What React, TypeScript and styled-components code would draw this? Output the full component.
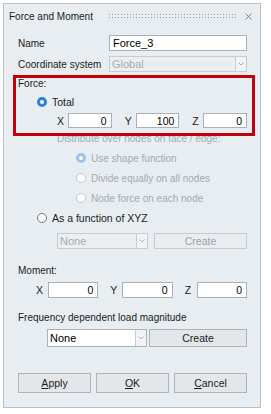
import styled, { createGlobalStyle } from 'styled-components'

const GlobalStyle = createGlobalStyle`
body {
    margin: 0;
    background: #ffffff;
    font-family: "Liberation Sans", Arial, sans-serif;
    font-size: 10px;
    color: #1b1b1b;
}
`

const Radio = ({ checked, disabled }: { checked?: boolean; disabled?: boolean }) => (
    <RadioDot checked={checked} disabled={disabled} />
)

const Chevron = () => (
    <svg width="6" height="4" viewBox="0 0 6 4">
        <polyline points="0.5,0.5 3,3 5.5,0.5" fill="none" stroke="#a9b0b6" strokeWidth="1" />
    </svg>
)

const Dropdown = ({ value, disabled, w }: { value: string; disabled?: boolean; w?: number }) => (
    <Select disabled={disabled} w={w}>
        <SelectText disabled={disabled}>{value}</SelectText>
        <SelectArrow><Chevron /></SelectArrow>
    </Select>
)

const Axis = ({ label, value, lw }: { label: string; value: string; lw: number }) => (
    <AxisCell>
        <AxisLabel lw={lw}>{label}</AxisLabel>
        <NumInput>{value}</NumInput>
    </AxisCell>
)

const App = () => {
    return (
        <>
            <GlobalStyle />
            <Window>
                <TitleBar>
                    <Title>Force and Moment</Title>
                    <Grip />
                    <Close>
                        <svg width="7" height="7" viewBox="0 0 7 7">
                            <path d="M0.5 0.5 L6.5 6.5 M6.5 0.5 L0.5 6.5" stroke="#7b8288" strokeWidth="1" />
                        </svg>
                    </Close>
                </TitleBar>

                <Body>
                    <FieldRow>
                        <FieldLabel>Name</FieldLabel>
                        <TextInput>Force_3</TextInput>
                    </FieldRow>
                    <FieldRow mt={5}>
                        <FieldLabel>Coordinate system</FieldLabel>
                        <Dropdown value="Global" disabled />
                    </FieldRow>

                    <Caption mt={5}>Force:</Caption>
                    <RadioRow indent={19} mt={4} h={14}>
                        <Radio checked />
                        <span>Total</span>
                    </RadioRow>
                    <XyzRow indent={39} mt={4} gap={13} h={15}>
                        <Axis label="X" value="0" lw={11} />
                        <Axis label="Y" value="100" lw={11} />
                        <Axis label="Z" value="0" lw={11} />
                    </XyzRow>

                    <Caption mt={4} indent={39} disabled>Distribute over nodes on face / edge:</Caption>
                    <RadioRow indent={58} mt={2} disabled>
                        <Radio checked disabled />
                        <span>Use shape function</span>
                    </RadioRow>
                    <RadioRow indent={58} disabled>
                        <Radio disabled />
                        <span>Divide equally on all nodes</span>
                    </RadioRow>
                    <RadioRow indent={58} disabled>
                        <Radio disabled />
                        <span>Node force on each node</span>
                    </RadioRow>
                    <RadioRow indent={19}>
                        <Radio />
                        <span>As a function of XYZ</span>
                    </RadioRow>
                    <ComboRow indent={39} mt={5} gap={6} h={16}>
                        <Dropdown value="None" disabled w={91} />
                        <Button disabled>Create</Button>
                    </ComboRow>

                    <Caption mt={15}>Moment:</Caption>
                    <XyzRow indent={18} mt={4} gap={12} h={16}>
                        <Axis label="X" value="0" lw={12} />
                        <Axis label="Y" value="0" lw={12} />
                        <Axis label="Z" value="0" lw={12} />
                    </XyzRow>

                    <Caption mt={13}>Frequency dependent load magnitude</Caption>
                    <ComboRow indent={29} mt={4} gap={2} h={18}>
                        <Dropdown value="None" w={100} />
                        <Button>Create</Button>
                    </ComboRow>

                    <ActionRow>
                        <Button><u>A</u>pply</Button>
                        <Button><u>O</u>K</Button>
                        <Button><u>C</u>ancel</Button>
                    </ActionRow>
                </Body>

                <Highlight />
            </Window>
        </>
    )
}

export default App


const Window = styled.div`
position: relative;
box-sizing: border-box;
margin: 3px 0 0 3px;
width: 258px;
height: 405px;
border: 1px solid #b9c0c7;
background: #e8edf1;
`

const TitleBar = styled.div`
display: flex;
align-items: center;
height: 24px;
padding: 0 8px 0 5px;
`

const Title = styled.div`
white-space: nowrap;
color: #1b1b1b;
`

const Grip = styled.div`
flex: 1;
height: 6px;
margin: 0 7px 0 15px;
background-image: radial-gradient(circle, #8f979e 0.7px, transparent 0.9px);
background-size: 3px 3px;
`

const Close = styled.div`
display: flex;
align-items: center;
`

const Body = styled.div`
display: flex;
flex-direction: column;
padding: 7px 13px 0 14px;
`

const FieldRow = styled.div<{ mt?: number }>`
display: flex;
align-items: center;
height: 16px;
margin-top: ${p => p.mt || 0}px;
`

const FieldLabel = styled.div`
width: 91px;
white-space: nowrap;
`

const TextInput = styled.div`
flex: 1;
box-sizing: border-box;
height: 16px;
line-height: 14px;
padding-left: 3px;
background: #ffffff;
border: 1px solid #a9b1b8;
color: #000;
font-size: 11px;
`

const Select = styled.div<{ disabled?: boolean; w?: number }>`
display: flex;
box-sizing: border-box;
${p => p.w ? `width: ${p.w}px;` : 'flex: 1;'}
height: 100%;
background: ${p => p.disabled ? '#eceff1' : '#ffffff'};
border: 1px solid ${p => p.disabled ? '#c6ccd1' : '#aab2b9'};
`

const SelectText = styled.div<{ disabled?: boolean }>`
flex: 1;
display: flex;
align-items: center;
padding-left: 2px;
font-size: 11px;
color: ${p => p.disabled ? '#a4aaaf' : '#000'};
`

const SelectArrow = styled.div`
display: flex;
align-items: center;
justify-content: center;
width: 10px;
border-left: 1px solid #c6ccd1;
background: #f1f3f5;
`

const Caption = styled.div<{ mt?: number; indent?: number; disabled?: boolean }>`
height: 14px;
line-height: 14px;
margin-top: ${p => p.mt || 0}px;
padding-left: ${p => p.indent || 0}px;
white-space: nowrap;
color: ${p => p.disabled ? '#a4aab0' : '#1b1b1b'};
`

const RadioRow = styled.div<{ indent: number; mt?: number; h?: number; disabled?: boolean }>`
display: flex;
align-items: center;
gap: 5px;
height: ${p => p.h || 20}px;
margin-top: ${p => p.mt || 0}px;
padding-left: ${p => p.indent}px;
font-size: ${p => p.disabled ? 10 : 10.5}px;
color: ${p => p.disabled ? '#a4aab0' : '#1b1b1b'};
white-space: nowrap;
`

const RadioDot = styled.span<{ checked?: boolean; disabled?: boolean }>`
box-sizing: border-box;
width: 10px;
height: 10px;
border-radius: 50%;
flex-shrink: 0;
${p => p.checked
        ? `border: 3px solid ${p.disabled ? '#9ec2ea' : '#2f80d8'}; background: #ffffff;`
        : `border: 1px solid ${p.disabled ? '#c4cad0' : '#6f777e'}; background: #ffffff;`}
`

const XyzRow = styled.div<{ indent: number; mt: number; gap: number; h: number }>`
display: flex;
height: ${p => p.h}px;
margin-top: ${p => p.mt}px;
padding-left: ${p => p.indent}px;
gap: ${p => p.gap}px;
`

const AxisCell = styled.div`
flex: 1;
display: flex;
align-items: center;
`

const AxisLabel = styled.div<{ lw: number }>`
width: ${p => p.lw}px;
flex-shrink: 0;
font-size: 10.5px;
`

const NumInput = styled.div`
flex: 1;
box-sizing: border-box;
height: 100%;
display: flex;
align-items: center;
justify-content: flex-end;
padding-right: 4px;
background: #ffffff;
border: 1px solid #a9b1b8;
font-size: 10.5px;
color: #000;
`

const ComboRow = styled.div<{ indent: number; mt: number; gap: number; h: number }>`
display: flex;
height: ${p => p.h}px;
margin-top: ${p => p.mt}px;
padding-left: ${p => p.indent}px;
gap: ${p => p.gap}px;
`

const Button = styled.div<{ disabled?: boolean }>`
flex: 1;
box-sizing: border-box;
display: flex;
align-items: center;
justify-content: center;
height: 100%;
font-size: 10.5px;
background: ${p => p.disabled ? '#e9edf0' : '#e3e7ea'};
border: 1px solid ${p => p.disabled ? '#c5cbd0' : '#adb4bb'};
color: ${p => p.disabled ? '#9ba1a7' : '#1b1b1b'};
u { text-underline-offset: 1px; }
`

const ActionRow = styled.div`
display: flex;
gap: 5px;
height: 20px;
margin-top: 26px;
`

const Highlight = styled.div`
position: absolute;
left: 9px;
top: 71px;
width: 242px;
height: 61px;
box-sizing: border-box;
border: 3px solid #c4000b;
pointer-events: none;
`
